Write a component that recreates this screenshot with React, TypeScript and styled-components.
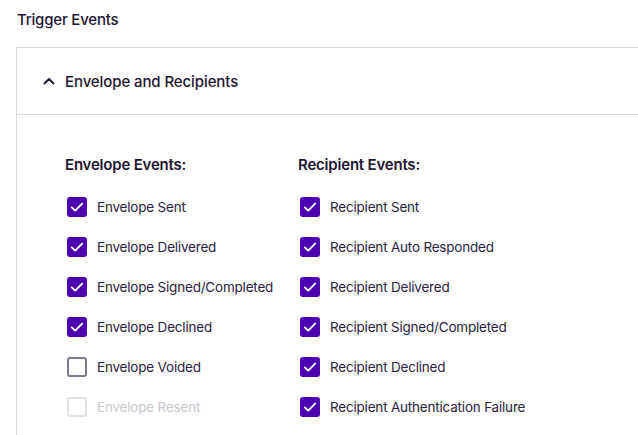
import React from "react";
import styled, { createGlobalStyle } from "styled-components";

const GlobalStyle = createGlobalStyle`
  html, body {
    margin: 0;
    padding: 0;
    background: #ffffff;
  }
  body {
    font-family: Inter, "Noto Sans", sans-serif;
    color: #1e1433;
  }
`;

const Page = styled.div`
  width: 638px;
  height: 435px;
  overflow: hidden;
  padding: 10px 0 0 17px;
  box-sizing: border-box;
`;

const Title = styled.h2`
  margin: 0 0 17px;
  font-size: 15px;
  font-weight: 500;
  line-height: 20px;
  letter-spacing: -0.2px;
`;

const Card = styled.div`
  border: 1px solid #d9d9d9;
  border-right: none;
  border-bottom: none;
  margin-left: -1px;
  min-height: 400px;
`;

const CardHeader = styled.div`
  display: flex;
  align-items: center;
  gap: 10px;
  height: 66px;
  padding-left: 26px;
  border-bottom: 1px solid #d9d9d9;
  font-size: 15px;
  font-weight: 500;
  letter-spacing: -0.1px;
`;

const Columns = styled.div`
  display: flex;
  padding: 40px 0 0 48px;
`;

const Column = styled.div<{ width: number }>`
  width: ${({ width }) => width}px;
  display: flex;
  flex-direction: column;
`;

const Heading = styled.div`
  font-size: 15px;
  font-weight: 600;
  line-height: 20px;
  margin: 0 0 12px;
  letter-spacing: -0.2px;
`;

const Item = styled.label<{ disabled?: boolean }>`
  display: flex;
  align-items: center;
  gap: 10px;
  height: 40px;
  margin-left: 2px;
  font-size: 13.5px;
  letter-spacing: -0.2px;
  color: ${({ disabled }) => (disabled ? "#c9c7cf" : "#2a2140")};
`;

const Box = styled.span<{ checked: boolean; disabled?: boolean }>`
  width: 20px;
  height: 20px;
  box-sizing: border-box;
  border-radius: 3px;
  flex-shrink: 0;
  display: flex;
  align-items: center;
  justify-content: center;
  background: ${({ checked }) => (checked ? "#4c00b0" : "#fff")};
  border: ${({ checked, disabled }) =>
    checked ? "none" : disabled ? "2px solid #e2e1e5" : "2px solid #807a8c"};
`;

const Check = () => (
  <svg width="16" height="16" viewBox="0 0 16 16" fill="none">
    <path
      d="M2.8 8.4 L6.2 11.6 L13.2 4.6"
      stroke="#fff"
      strokeWidth="1.9"
      strokeLinecap="round"
      strokeLinejoin="round"
    />
  </svg>
);

const Chevron = () => (
  <svg width="12" height="12" viewBox="0 0 12 12" fill="none">
    <path
      d="M1.5 8.5 L6 4 L10.5 8.5"
      stroke="#1e1433"
      strokeWidth="1.8"
      strokeLinecap="round"
      strokeLinejoin="round"
    />
  </svg>
);

type Ev = { label: string; checked: boolean; disabled?: boolean };

const envelopeEvents: Ev[] = [
  { label: "Envelope Sent", checked: true },
  { label: "Envelope Delivered", checked: true },
  { label: "Envelope Signed/Completed", checked: true },
  { label: "Envelope Declined", checked: true },
  { label: "Envelope Voided", checked: false },
  { label: "Envelope Resent", checked: false, disabled: true },
];

const recipientEvents: Ev[] = [
  { label: "Recipient Sent", checked: true },
  { label: "Recipient Auto Responded", checked: true },
  { label: "Recipient Delivered", checked: true },
  { label: "Recipient Signed/Completed", checked: true },
  { label: "Recipient Declined", checked: true },
  { label: "Recipient Authentication Failure", checked: true },
];

const EventList = ({ items }: { items: Ev[] }) => (
  <>
    {items.map((e) => (
      <Item key={e.label} disabled={e.disabled}>
        <Box checked={e.checked} disabled={e.disabled}>
          {e.checked && <Check />}
        </Box>
        {e.label}
      </Item>
    ))}
  </>
);

export default function App() {
  return (
    <Page>
      <GlobalStyle />
      <Title>Trigger Events</Title>
      <Card>
        <CardHeader>
          <Chevron />
          Envelope and Recipients
        </CardHeader>
        <Columns>
          <Column width={233}>
            <Heading>Envelope Events:</Heading>
            <EventList items={envelopeEvents} />
          </Column>
          <Column width={320}>
            <Heading>Recipient Events:</Heading>
            <EventList items={recipientEvents} />
          </Column>
        </Columns>
      </Card>
    </Page>
  );
}
